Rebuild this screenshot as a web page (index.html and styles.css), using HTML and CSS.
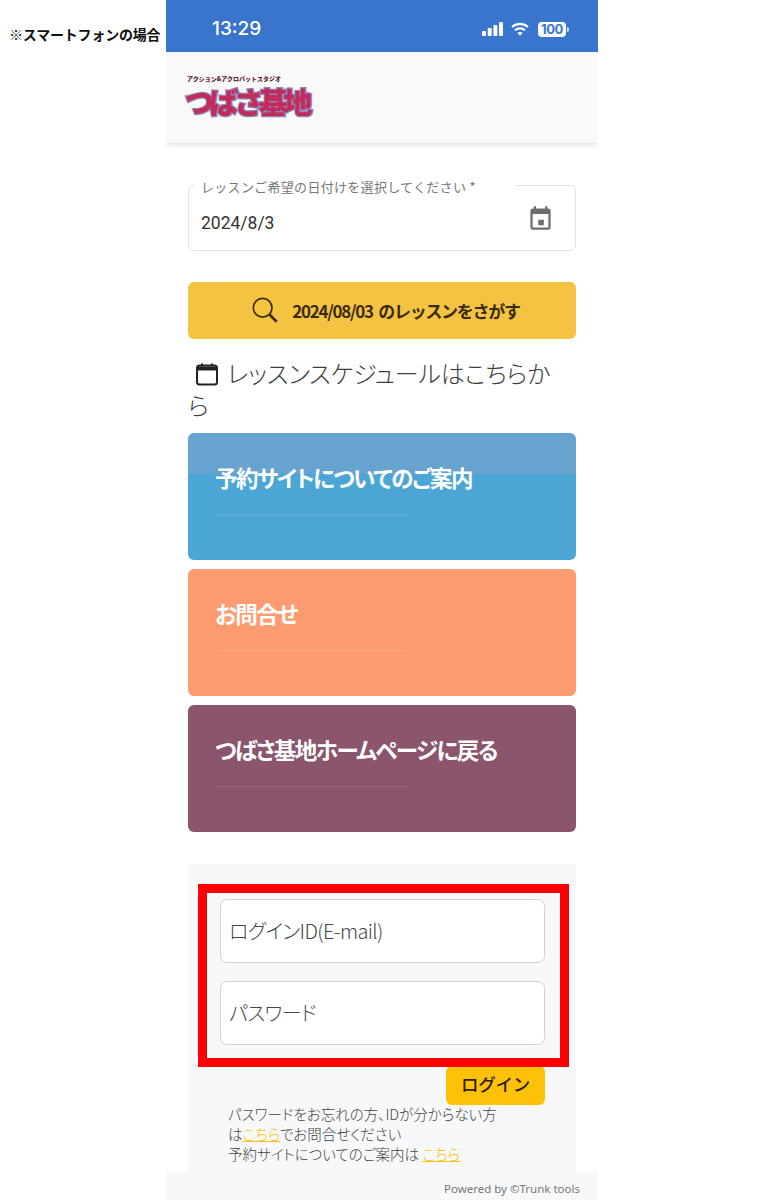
FILE: index.html
```html
<!DOCTYPE html>
<html lang="ja">
<head>
<meta charset="utf-8">
<title>つばさ基地 予約サイト</title>
<link rel="stylesheet" href="styles.css">
</head>
<body>
<div class="sheet">
  <aside class="note">※スマートフォンの場合</aside>
  <main class="phone">
    <div class="status">
      <span class="clock">13:29</span>
      <div class="status-icons">
        <svg width="21" height="14" viewBox="0 0 21 14"><g fill="#fff"><rect x="0" y="9" width="4" height="5" rx="1"/><rect x="5.7" y="6" width="4" height="8" rx="1"/><rect x="11.4" y="3" width="4" height="11" rx="1"/><rect x="17" y="0" width="4" height="14" rx="1"/></g></svg>
        <svg width="18" height="14" viewBox="0 0 18 14"><g fill="none" stroke="#fff" stroke-width="2.2"><path d="M1 5C5.5.7 12.5.7 17 5"/><path d="M4 8.2c2.8-2.5 7.2-2.5 10 0"/></g><path d="M6.4 10.8 9 13.8l2.6-3c-1.5-1.2-3.7-1.2-5.2 0z" fill="#fff"/></svg>
        <div class="battery"><span class="battery-level">100</span><span class="battery-tip"></span></div>
      </div>
    </div>
    <header class="brand-bar">
      <div class="logo">
        <span class="logo-sub">アクション&amp;アクロバットスタジオ</span>
        <span class="logo-main">つばさ基地</span>
      </div>
    </header>

    <section class="content">
      <div class="date-field">
        <span class="date-label">レッスンご希望の日付けを選択してください *</span>
        <span class="date-value">2024/8/3</span>
        <svg class="date-icon" width="27" height="27" viewBox="0 0 24 24"><path fill="#6e6e6e" d="M15 13h-5v5h5v-5zM16 1v2H8V1H6v2H5c-1.11 0-1.99.9-1.99 2L3 20c0 1.1.89 2 2 2h14c1.1 0 2-.9 2-2V5c0-1.1-.9-2-2-2h-1V1h-2zm3 19H5V8h14v12z"/></svg>
      </div>

      <button class="search-btn" type="button">
        <svg width="28" height="28" viewBox="0 0 30 30"><g fill="none" stroke="#3a2c0a"><circle cx="12.5" cy="11.5" r="10" stroke-width="1.8"/><path d="M19.5 18.5l8 8" stroke-width="2.8"/></g></svg>
        <span>2024/08/03 のレッスンをさがす</span>
      </button>

      <h2 class="schedule">
        <svg class="schedule-icon" width="24" height="24" viewBox="0 0 24 24"><rect x="2" y="3.5" width="20" height="19" rx="2.5" fill="none" stroke="#222" stroke-width="2"/><path d="M2 4.5h20v4H2z" fill="#222"/><path d="M7 1.5v3M17 1.5v3" stroke="#222" stroke-width="2"/></svg>
        レッスンスケジュールはこちらから
      </h2>

      <div class="cards">
        <a class="card card-blue"><span class="card-title">予約サイトについてのご案内</span><span class="card-rule"></span></a>
        <a class="card card-orange"><span class="card-title">お問合せ</span><span class="card-rule"></span></a>
        <a class="card card-plum"><span class="card-title">つばさ基地ホームページに戻る</span><span class="card-rule"></span></a>
      </div>

      <div class="login">
        <div class="login-field">ログインID(E-mail)</div>
        <div class="login-field">パスワード</div>
        <div class="login-actions"><button class="login-btn" type="button">ログイン</button></div>
        <p class="login-help">パスワードをお忘れの方、IDが分からない方<br>は<a class="help-link">こちら</a>でお問合せください<br>予約サイトについてのご案内は <a class="help-link">こちら</a></p>
        <div class="highlight"></div>
      </div>
    </section>

    <footer class="powered">Powered by ©Trunk tools</footer>
  </main>
</div>
</body>
</html>
```

FILE: styles.css
```css
* { box-sizing: border-box; }
html, body { margin: 0; padding: 0; background: #fff; }
body { font-family: "Noto Sans", "Noto Sans CJK JP", sans-serif; color: #333; height: 1200px; overflow: hidden; }

.sheet { display: flex; width: 764px; height: 1200px; }
.note { width: 166px; flex: none; padding: 25px 0 0 9px; font: 700 14px/18px "Noto Sans CJK JP", sans-serif; color: #111; letter-spacing: -0.2px; white-space: nowrap; }
.phone { width: 432px; flex: none; height: 1200px; display: flex; flex-direction: column; overflow: hidden; }

.status { height: 52px; flex: none; background: #3a75cd; color: #fff; display: flex; justify-content: space-between; align-items: center; padding: 6px 29px 0 46px; }
.clock { font: 500 19px/24px Inter, "Liberation Sans", sans-serif; }
.status-icons { display: flex; align-items: center; gap: 7px; }
.status-icons svg + svg { margin: 0 2px 0 1px; }
.battery { display: flex; align-items: center; gap: 1px; }
.battery-level { display: block; width: 28px; height: 15px; border-radius: 4px; background: #fff; color: #3a75cd; font: 700 13px/15px Inter, "Liberation Sans", sans-serif; letter-spacing: -0.4px; text-align: center; }
.battery-tip { width: 2px; height: 5px; border-radius: 0 2px 2px 0; background: #cfe0f5; }

.brand-bar { height: 91px; flex: none; background: #f9f9f9; box-shadow: 0 2px 5px rgba(0,0,0,.12); padding: 22px 0 0 19px; }
.logo { display: flex; flex-direction: column; width: 130px; }
.logo-sub { font: 900 6px/9px "Noto Sans CJK JP", sans-serif; color: #5a1c34; padding-left: 2px; white-space: nowrap; }
.logo-main { margin-top: 2px; font: 900 29px/33px "Noto Sans CJK JP", sans-serif; color: #c22c5c; letter-spacing: -4.4px; -webkit-text-stroke: 2.5px #8b86b8; paint-order: stroke fill; white-space: nowrap; }

.content { flex: 1; padding: 42px 22px 0; min-height: 0; }

.date-field { position: relative; height: 66px; border: 1px solid #e2e2e2; border-radius: 6px; display: flex; align-items: center; justify-content: space-between; padding: 10px 21px 0 12px; }
.date-label { position: absolute; left: 5px; top: -7px; background: #fff; padding: 0 40px 0 7px; font: 400 13px/16px "Noto Sans CJK JP", sans-serif; color: #777; letter-spacing: .3px; white-space: nowrap; }
.date-value { font: 400 17.5px/24px Roboto, sans-serif; color: #333; }
.date-icon { margin-top: -10px; }

.search-btn { display: flex; width: 100%; height: 57px; margin-top: 31px; align-items: center; justify-content: center; gap: 13px; border: 0; border-radius: 6px; background: #f5c342; font: 700 17px/24px "Noto Sans CJK JP", sans-serif; letter-spacing: -1.3px; word-spacing: 3px; color: #3a2c0a; padding: 0 0 0 7px; }

.schedule { margin: 18px 0 13px; padding-right: 20px; font: 300 24px/31.5px "Noto Sans CJK JP", sans-serif; font-feature-settings: "palt"; color: #3d3d3d; letter-spacing: -0.1px; }
.schedule-icon { display: inline-block; vertical-align: -3px; margin: 0 3px 0 7px; }

.cards { display: flex; flex-direction: column; gap: 9px; }
.card { display: flex; flex-direction: column; height: 127px; border-radius: 6px; padding: 24px 27px 0; color: #fff; }
.card-title { font: 700 22.5px/40px "Noto Sans CJK JP", sans-serif; font-feature-settings: "palt"; letter-spacing: -1.5px; white-space: nowrap; }
.card-rule { display: block; width: 193px; height: 1px; margin-top: 17px; background: rgba(255,255,255,.12); }
.card-blue { background: linear-gradient(#66a3cf 41px, #4ba6d5 41px); }
.card-orange { background: #ff9b71; }
.card-plum { background: #8a556d; }

.login { position: relative; margin-top: 32px; height: 307px; background: #f7f8fa; padding: 35px 31px 0 32px; display: flex; flex-direction: column; }
.login-field { height: 64px; flex: none; background: #fff; border: 1px solid #cfd2da; border-radius: 7px; padding: 0 8px; font: 300 20px/62px "Noto Sans CJK JP", "Noto Sans", sans-serif; font-feature-settings: "palt"; color: #444; letter-spacing: -0.6px; }
.login-field + .login-field { margin-top: 18px; }
.login-actions { display: flex; justify-content: flex-end; margin-top: 21px; }
.login-btn { width: 99px; height: 39px; border: 0; border-radius: 6px; background: #ffc107; color: #2a2000; font: 500 17.5px/34px "Noto Sans CJK JP", sans-serif; padding: 0 0 4px; letter-spacing: -0.3px; }
.login-help { margin: -1px 0 0; padding: 0 0 0 8px; font: 300 14.5px/20px "Noto Sans CJK JP", sans-serif; font-feature-settings: "palt"; color: #444; white-space: nowrap; }
.help-link { color: #ffc107; text-decoration: underline; }
.highlight { position: absolute; left: 10px; top: 20px; width: 371px; height: 183px; border: 9px solid #f00; }

.powered { height: 29px; flex: none; background: #f7f8fa; text-align: right; padding-right: 18px; font: 400 11.5px/36px "Noto Sans", sans-serif; color: #777; overflow: hidden; }
```
